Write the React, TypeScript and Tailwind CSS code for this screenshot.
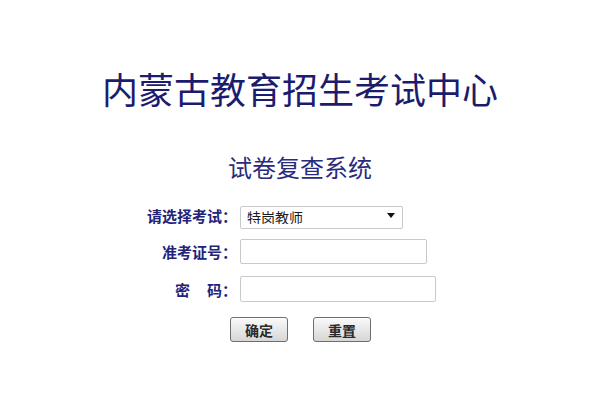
const cjk = { fontFamily: '"Noto Sans CJK SC", "Noto Sans", sans-serif' };

function Label({ children }: { children: React.ReactNode }) {
  return (
    <div className="mr-[3px] w-[137px] shrink-0 text-right text-[15px] font-semibold leading-none text-[#23237a]">
      {children}
    </div>
  );
}

function Btn({ children }: { children: React.ReactNode }) {
  return (
    <button
      type="button"
      className="h-[25px] w-[58px] rounded-[3px] border border-[#6e6e6e] bg-gradient-to-b from-[#fafafa] to-[#d6d6d6] text-[14px] font-bold leading-none text-[#2a2a2a] shadow-[inset_0_1px_0_#fff]"
    >
      {children}
    </button>
  );
}

export default function App() {
  return (
    <div className="flex h-[400px] w-[600px] flex-col items-center bg-white" style={cjk}>
      <h1 className="mt-[70px] text-[36px] font-normal leading-[36px] text-[#1c1c6e]">
        内蒙古教育招生考试中心
      </h1>
      <h2 className="mt-[49px] text-[24px] font-normal leading-[24px] text-[#2b2b7c]">
        试卷复查系统
      </h2>

      <form className="mt-[25px] flex w-full flex-col">
        <div className="flex h-[23px] items-center pl-[100px]">
          <Label>请选择考试：</Label>
          <div className="relative h-[23px] w-[163px]">
            <select
              defaultValue="tg"
              className="h-full w-full appearance-none rounded-[2px] border border-[#c9c9c9] bg-white pl-[6px] text-[14px] leading-none text-[#1a1a1a] outline-none"
              style={cjk}
            >
              <option value="tg">特岗教师</option>
            </select>
            <svg
              className="pointer-events-none absolute right-[8px] top-[9px]"
              width="8"
              height="5"
              viewBox="0 0 8 5"
            >
              <path d="M0 0h8L4 5z" fill="#111" />
            </svg>
          </div>
        </div>

        <div className="mt-[12px] flex h-[25px] items-center pl-[100px]">
          <Label>准考证号：</Label>
          <input
            type="text"
            className="h-[25px] w-[187px] rounded-[2px] border border-[#c9c9c9] bg-white outline-none"
          />
        </div>

        <div className="mt-[12px] flex h-[26px] items-center pl-[100px]">
          <Label>
            密<span className="inline-block w-[17px]" />码：
          </Label>
          <input
            type="password"
            className="h-[26px] w-[196px] rounded-[2px] border border-[#c9c9c9] bg-white outline-none"
          />
        </div>

        <div className="mt-[15px] flex justify-center gap-[25px] pl-[1px]">
          <Btn>确定</Btn>
          <Btn>重置</Btn>
        </div>
      </form>
    </div>
  );
}
